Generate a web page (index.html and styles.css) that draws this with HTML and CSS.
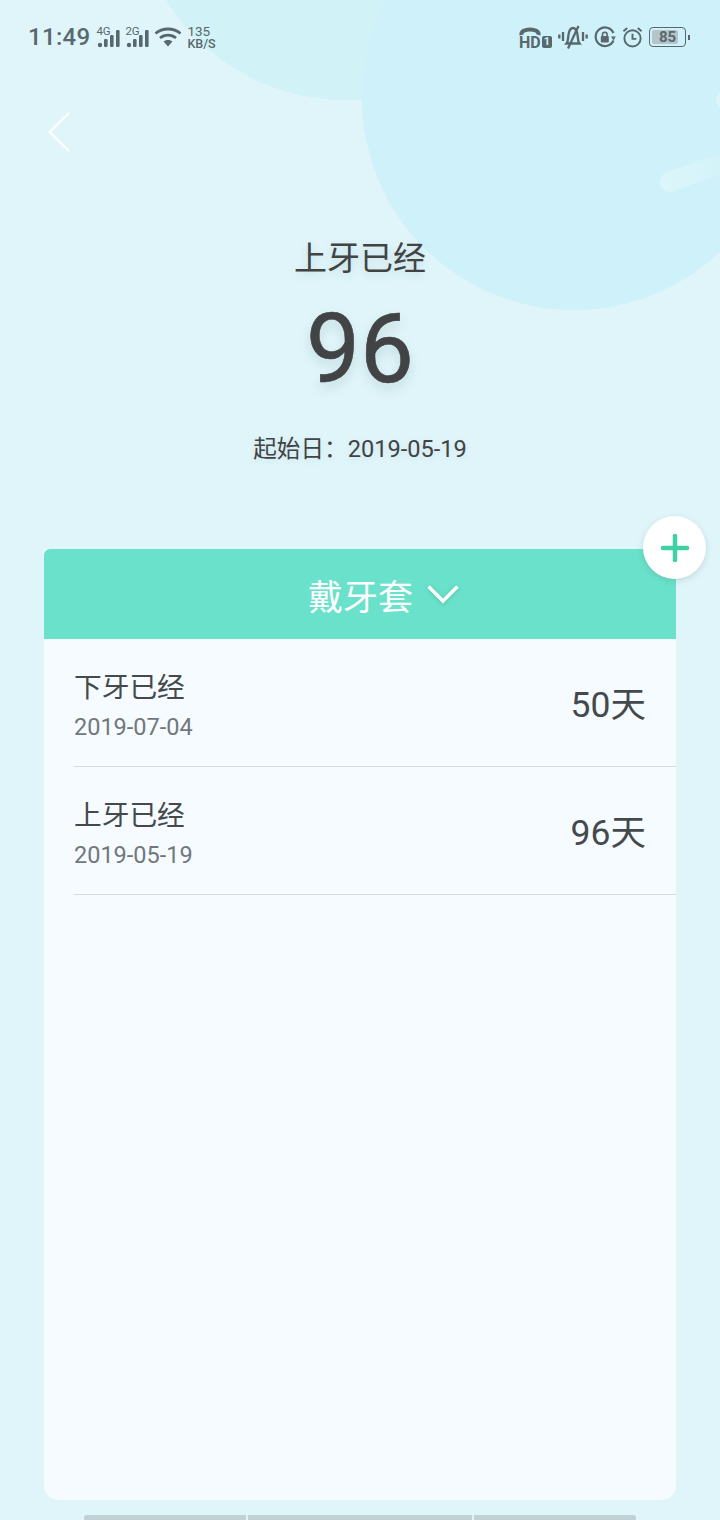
FILE: index.html
```html
<!DOCTYPE html>
<html lang="en">
<head>
    <meta charset="UTF-8">
    <meta name="viewport" content="width=device-width, initial-scale=1.0">
    <title>上牙已经</title>
    <link rel="stylesheet" href="styles.css">
</head>
<body>
    <div class="page">
        <!-- background decoration -->
        <div class="deco deco-top"></div>
        <div class="deco deco-big"></div>
        <div class="deco deco-dot"></div>
        <div class="deco deco-streak"></div>

        <div class="status-bar">
            <div class="status-left">
                <span class="time">11:49</span>
                <div class="signal">
                    <span class="signal-label">4G</span>
                    <svg width="26" height="18" viewBox="0 0 26 18"><g fill="#58686c"><circle cx="3" cy="15" r="2.2"/><rect x="7" y="9" width="3.6" height="8" rx="1.2"/><rect x="13" y="5" width="3.6" height="12" rx="1.2"/><rect x="19" y="0" width="3.6" height="17" rx="1.2"/></g></svg>
                </div>
                <div class="signal">
                    <span class="signal-label">2G</span>
                    <svg width="26" height="18" viewBox="0 0 26 18"><g fill="#58686c"><circle cx="3" cy="15" r="2.2"/><rect x="7" y="9" width="3.6" height="8" rx="1.2"/><rect x="13" y="5" width="3.6" height="12" rx="1.2"/><rect x="19" y="0" width="3.6" height="17" rx="1.2"/></g></svg>
                </div>
                <svg class="wifi" width="28" height="20" viewBox="0 0 28 20"><g fill="none" stroke="#58686c" stroke-width="2.8"><path d="M1.5 6.5C8.5 .5 19.5 .5 26.5 6.5"/><path d="M6 11C10.5 7.2 17.5 7.2 22 11"/></g><path d="M9.6 14.4C12.2 12.4 15.8 12.4 18.4 14.4L14 19.4z" fill="#58686c"/></svg>
                <div class="speed"><span class="speed-num">135</span><span>KB/S</span></div>
            </div>
            <div class="status-right">
                <div class="hd">
                    <svg width="28" height="10" viewBox="0 0 28 10"><path d="M2.500 9C1 1.500 21 1.500 19.500 9" fill="none" stroke="#58686c" stroke-width="4"/></svg>
                    <div class="hd-text"><span>HD</span><span class="hd-one">1</span></div>
                </div>
                <svg width="30" height="24" viewBox="0 0 30 24"><g fill="none" stroke="#58686c" stroke-width="2.300"><path d="M8.500 18.500C10.500 16 10 12 10.500 9.500C11.200 5.500 13 3 15 3C17 3 18.800 5.500 19.500 9.500C20 12 19.500 16 21.500 18.500z"/><path d="M20.500 1L10 23.500"/><path d="M5 7V16M1.300 9.500V13.500M25 7V16M28.700 9.500V13.500"/></g></svg>
                <svg width="22" height="22" viewBox="0 0 22 22"><path d="M19.500 14.500A9.300 9.300 0 1 1 19.500 7" fill="none" stroke="#58686c" stroke-width="2.200"/><path d="M17 10.500H21.800L19.500 14.500z" fill="#58686c"/><rect x="6.800" y="10" width="8" height="6.500" rx="1" fill="#58686c"/><path d="M8.500 10V8.500A2.300 2.300 0 0 1 13.100 8.500V10" fill="none" stroke="#58686c" stroke-width="1.600"/></svg>
                <svg width="21" height="24" viewBox="0 0 22 24"><g fill="none" stroke="#58686c" stroke-width="2"><circle cx="11" cy="13.500" r="8.500"/><path d="M11 8.500V14H15"/><path d="M1.500 6L5.500 2.500M20.500 6L16.500 2.500"/></g></svg>
                <div class="battery">
                    <div class="battery-body"><div class="battery-fill" style="width:85%"></div><span class="battery-num">85</span></div>
                    <div class="battery-tip"></div>
                </div>
            </div>
        </div>

        <div class="back-row">
            <svg width="24" height="42" viewBox="0 0 24 42"><path d="M22 2L2.500 21L22 40" fill="none" stroke="#fff" stroke-width="2"/></svg>
        </div>

        <div class="hero">
            <div class="hero-title">上牙已经</div>
            <div class="hero-count">96</div>
            <div class="hero-date">起始日：<span class="hero-date-val">2019-05-19</span></div>
        </div>

        <div class="card">
            <div class="fab">
                <svg width="30" height="30" viewBox="0 0 30 30"><path d="M15 3V27M3 15H27" stroke="#3fd0a4" stroke-width="4.500" stroke-linecap="round"/></svg>
            </div>
            <div class="card-head">
                <span>戴牙套</span>
                <svg class="head-arrow" width="34" height="22" viewBox="0 0 34 22"><path d="M2.500 3.500L17 18L31.500 3.500" fill="none" stroke="#fff" stroke-width="3.500"/></svg>
            </div>
            <div class="row">
                <div class="row-main">
                    <div class="row-name">下牙已经</div>
                    <div class="row-date">2019-07-04</div>
                </div>
                <div class="row-days">50天</div>
            </div>
            <div class="row">
                <div class="row-main">
                    <div class="row-name">上牙已经</div>
                    <div class="row-date">2019-05-19</div>
                </div>
                <div class="row-days">96天</div>
            </div>
        </div>

        <div class="bottom-bar">
            <div class="seg seg-a"></div>
            <div class="seg seg-b"></div>
            <div class="seg seg-c"></div>
        </div>
    </div>
</body>
</html>
```

FILE: styles.css
```css
* {
    box-sizing: border-box;
}

body {
    margin: 0;
    font-family: Roboto, "Noto Sans CJK SC", sans-serif;
    color: #414345;
}

.page {
    position: relative;
    display: flex;
    flex-direction: column;
    width: 720px;
    height: 1520px;
    overflow: hidden;
    background: #dff5f9;
}

.deco {
    position: absolute;
    border-radius: 50%;
}

.deco-top {
    left: 135px;
    top: -320px;
    width: 420px;
    height: 420px;
    background: #d1f2f7;
}

.deco-big {
    left: 362px;
    top: -114px;
    width: 424px;
    height: 424px;
    background: #cff1f9;
}

.deco-dot {
    left: 716px;
    top: 90px;
    width: 20px;
    height: 20px;
    background: #dcf5fa;
}

.deco-streak {
    left: 658px;
    top: 160px;
    width: 90px;
    height: 20px;
    border-radius: 10px;
    background: linear-gradient(90deg, #dcf6fb, #d0f2f8);
    transform: rotate(-20deg);
}

.status-bar {
    position: relative;
    display: flex;
    justify-content: space-between;
    align-items: center;
    height: 74px;
    padding: 0 30px 0 28px;
    color: #58686c;
}

.status-left,
.status-right {
    display: flex;
    align-items: center;
}

.time {
    font-size: 24px;
    font-weight: 500;
    letter-spacing: 0.3px;
    margin-right: 7px;
}

.signal {
    position: relative;
    width: 26px;
    height: 20px;
    margin-right: 3px;
}

.signal svg {
    position: absolute;
    left: 0;
    top: 3px;
}

.signal-label {
    position: absolute;
    left: -1px;
    top: -2px;
    font-size: 11.5px;
    line-height: 12px;
}

.signal + .signal {
    margin-right: 0;
}

.wifi {
    margin: 0 5px 0 2px;
}

.speed {
    display: flex;
    flex-direction: column;
    font-size: 12.500px;
    font-weight: 500;
    line-height: 12px;
}

.speed-num {
    font-size: 13.500px;
    font-weight: 400;
    line-height: 14px;
}

.status-right {
    gap: 6px;
}

.hd {
    display: flex;
    flex-direction: column;
    width: 33px;
}

.hd-text {
    display: flex;
    align-items: center;
    font-size: 16px;
    font-weight: 700;
    line-height: 13px;
}

.hd-one {
    margin-left: 1px;
    padding: 0 2px;
    border-radius: 2px;
    background: #58686c;
    color: #cff1f9;
    font-size: 11px;
    line-height: 12px;
}

.battery {
    display: flex;
    align-items: center;
}

.battery-body {
    position: relative;
    width: 37px;
    height: 20px;
    padding: 2px;
    border: 1px solid #58686c;
    border-radius: 4px;
}

.battery-fill {
    height: 100%;
    border-radius: 2px;
    background: #b3c5ca;
}

.battery-num {
    position: absolute;
    inset: 0;
    text-align: center;
    font-size: 15px;
    font-weight: 700;
    line-height: 18px;
}

.battery-tip {
    width: 2px;
    height: 5px;
    margin-left: 2px;
    background: #58686c;
}

.back-row {
    position: relative;
    display: flex;
    height: 78px;
    padding: 37px 0 0 47px;
}

.hero {
    position: relative;
    display: flex;
    flex-direction: column;
    align-items: center;
    padding-top: 85px;
}

.hero-title {
    font-size: 33px;
    line-height: 44px;
    text-shadow: 0 3px 8px rgba(90, 120, 130, 0.2);
}

.hero-count {
    margin-top: 16px;
    font-size: 96px;
    line-height: 104px;
    -webkit-text-stroke: 0.6px #414345;
    text-shadow: 0 6px 12px rgba(90, 120, 130, 0.2);
}

.hero-date {
    margin-top: 33px;
    font-size: 23.600px;
    line-height: 30px;
    text-shadow: 0 2px 6px rgba(90, 120, 130, 0.12);
}

.card {
    position: relative;
    flex: 1;
    margin: 85px 44px 0;
    border-radius: 0 0 14px 14px;
    background: #f5fbfe;
}

.card-head {
    display: flex;
    justify-content: center;
    align-items: center;
    gap: 13px;
    height: 90px;
    padding-left: 48px;
    border-radius: 6px 6px 0 0;
    background: #6ae1ca;
    color: #fff;
    font-size: 35px;
}

.head-arrow {
    filter: drop-shadow(0 1px 2px rgba(60, 130, 115, 0.35));
}

.fab {
    position: absolute;
    right: -30px;
    top: -33px;
    display: flex;
    justify-content: center;
    align-items: center;
    width: 63px;
    height: 63px;
    border-radius: 50%;
    background: #fff;
    box-shadow: 0 2px 6px rgba(80, 110, 110, 0.2);
}

.row {
    display: flex;
    justify-content: space-between;
    align-items: center;
    height: 128px;
    margin-left: 30px;
    padding-right: 30px;
    border-bottom: 1px solid #d5dadc;
    color: #44494d;
}

.row-main {
    padding-top: 5px;
}

.row-name {
    font-size: 27.700px;
    line-height: 40px;
}

.row-date {
    margin-top: 3px;
    font-size: 23.500px;
    line-height: 32px;
    color: #71787d;
}

.row-days {
    padding-bottom: 2px;
    font-size: 35.500px;
}

.bottom-bar {
    display: flex;
    gap: 2px;
    height: 5px;
    margin: 15px 84px 0;
}

.seg {
    background: #c1d2d6;
}

.seg-a {
    width: 162px;
    border-radius: 3px 0 0 0;
}

.seg-b {
    width: 224px;
}

.seg-c {
    flex: 1;
    border-radius: 0 3px 0 0;
}
```
